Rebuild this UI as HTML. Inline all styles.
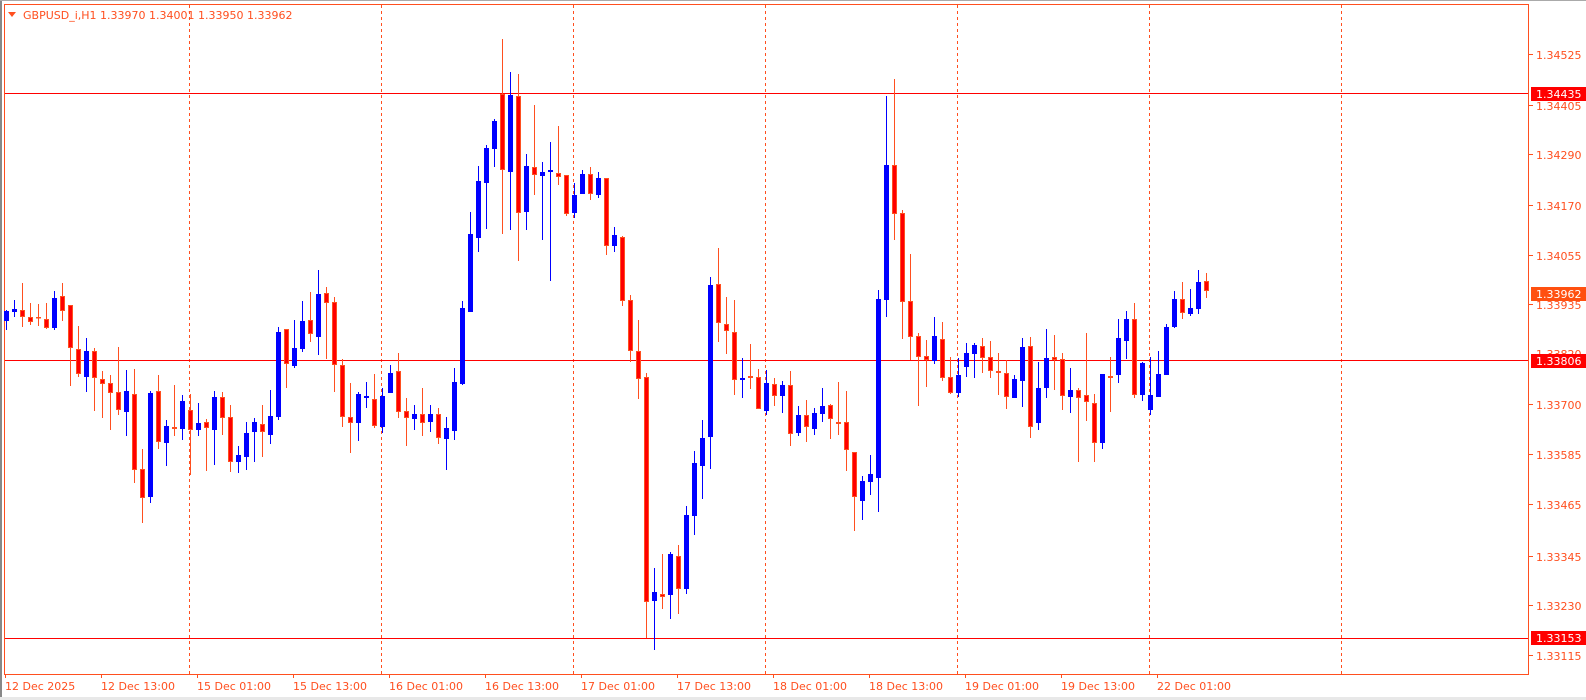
<!DOCTYPE html>
<html><head><meta charset="utf-8"><style>
html,body{margin:0;padding:0;background:#fff;width:1586px;height:700px;overflow:hidden}
svg{display:block}
text{font-family:"DejaVu Sans","Liberation Sans",sans-serif;font-size:11px;fill:#ff4f1f}
</style></head><body>
<svg id="c" width="1586" height="700" xmlns="http://www.w3.org/2000/svg">
<rect x="0" y="0" width="1586" height="700" fill="#fff"/>
<rect x="0" y="0" width="2" height="700" fill="#888"/>
<rect x="0" y="0" width="1586" height="1" fill="#aaa"/>
<rect x="0" y="697" width="1586" height="3" fill="#e8e8e8"/>
<rect x="4.5" y="4.5" width="1524" height="670" fill="none" stroke="#ff4f1f" stroke-width="1"/>
<g stroke="#ff4f1f" stroke-width="1" stroke-dasharray="3,3">
<line x1="189.5" y1="5" x2="189.5" y2="674"/><line x1="381.5" y1="5" x2="381.5" y2="674"/>
<line x1="573.5" y1="5" x2="573.5" y2="674"/><line x1="765.5" y1="5" x2="765.5" y2="674"/>
<line x1="957.5" y1="5" x2="957.5" y2="674"/><line x1="1149.5" y1="5" x2="1149.5" y2="674"/>
<line x1="1341.5" y1="5" x2="1341.5" y2="674"/>
</g>
<g stroke="#ff0000" stroke-width="1">
<line x1="5" y1="93.5" x2="1528" y2="93.5"/><line x1="5" y1="360.5" x2="1528" y2="360.5"/><line x1="5" y1="638.5" x2="1528" y2="638.5"/>
</g>
<g id="cd"></g>
<polygon points="8,12 16,12 12,17" fill="#ff4f1f"/>
<text x="23" y="19">GBPUSD_i,H1  1.33970 1.34001 1.33950 1.33962</text>
<g stroke="#ff4f1f"><line x1="1529" y1="54.5" x2="1533" y2="54.5"/><line x1="1529" y1="105.5" x2="1533" y2="105.5"/><line x1="1529" y1="154.5" x2="1533" y2="154.5"/><line x1="1529" y1="205.5" x2="1533" y2="205.5"/><line x1="1529" y1="255.5" x2="1533" y2="255.5"/><line x1="1529" y1="304.5" x2="1533" y2="304.5"/><line x1="1529" y1="404.5" x2="1533" y2="404.5"/><line x1="1529" y1="454.5" x2="1533" y2="454.5"/><line x1="1529" y1="504.5" x2="1533" y2="504.5"/><line x1="1529" y1="556.5" x2="1533" y2="556.5"/><line x1="1529" y1="605.5" x2="1533" y2="605.5"/><line x1="1529" y1="655.5" x2="1533" y2="655.5"/></g>
<text x="1536" y="59">1.34525</text><text x="1536" y="110">1.34405</text><text x="1536" y="159">1.34290</text><text x="1536" y="210">1.34170</text><text x="1536" y="260">1.34055</text><text x="1536" y="309">1.33935</text><text x="1536" y="358">1.33820</text><text x="1536" y="409">1.33700</text><text x="1536" y="459">1.33585</text><text x="1536" y="509">1.33465</text><text x="1536" y="561">1.33345</text><text x="1536" y="610">1.33230</text><text x="1536" y="660">1.33115</text>
<rect x="1531" y="87" width="55" height="14" fill="#ff0000"/><text x="1536" y="98" style="fill:#fff">1.34435</text>
<rect x="1531" y="287" width="55" height="14" fill="#ff5010"/><text x="1536" y="298" style="fill:#fff">1.33962</text>
<rect x="1531" y="354" width="55" height="14" fill="#ff0000"/><text x="1536" y="365" style="fill:#fff">1.33806</text>
<rect x="1531" y="631" width="55" height="14" fill="#ff0000"/><text x="1536" y="642" style="fill:#fff">1.33153</text>
<g stroke="#ff4f1f"><line x1="5.5" y1="675" x2="5.5" y2="678"/><line x1="101.5" y1="675" x2="101.5" y2="678"/><line x1="197.5" y1="675" x2="197.5" y2="678"/><line x1="293.5" y1="675" x2="293.5" y2="678"/><line x1="389.5" y1="675" x2="389.5" y2="678"/><line x1="485.5" y1="675" x2="485.5" y2="678"/><line x1="581.5" y1="675" x2="581.5" y2="678"/><line x1="677.5" y1="675" x2="677.5" y2="678"/><line x1="773.5" y1="675" x2="773.5" y2="678"/><line x1="869.5" y1="675" x2="869.5" y2="678"/><line x1="965.5" y1="675" x2="965.5" y2="678"/><line x1="1061.5" y1="675" x2="1061.5" y2="678"/><line x1="1157.5" y1="675" x2="1157.5" y2="678"/></g>
<text x="5" y="690">12 Dec 2025</text><text x="101" y="690">12 Dec 13:00</text><text x="197" y="690">15 Dec 01:00</text><text x="293" y="690">15 Dec 13:00</text><text x="389" y="690">16 Dec 01:00</text><text x="485" y="690">16 Dec 13:00</text><text x="581" y="690">17 Dec 01:00</text><text x="677" y="690">17 Dec 13:00</text><text x="773" y="690">18 Dec 01:00</text><text x="869" y="690">18 Dec 13:00</text><text x="965" y="690">19 Dec 01:00</text><text x="1061" y="690">19 Dec 13:00</text><text x="1157" y="690">22 Dec 01:00</text>
</svg>
<script>
var d=[
"B310 311 321 330","B300 309 312 317","R283 310 317 327","R303 317 322 325","R304 317 318 326","R303 319 328 329","B291 298 328 330","R283 296 311 321","R305 305 348 386","R326 349 374 377","B338 351 377 392","R348 351 378 411","R371 379 384 418","R375 383 393 430","R347 392 410 415","B370 391 412 436","R369 394 470 483","R449 469 498 523","B391 393 497 503","R375 391 442 449","B420 426 443 466","R385 427 429 436","B395 401 429 440","R394 410 430 475","B403 423 430 436","R419 422 428 471","B391 397 430 465","R392 397 418 435","R405 417 462 472","B446 455 462 473","B422 433 457 470","B418 422 432 462","R405 424 432 457","B390 416 435 444","B327 332 417 420","R333 329 364 388","B320 348 366 368",
"B301 321 349 352","R292 320 334 342","B270 294 337 355","R287 293 303 359","R297 302 365 392","R359 365 417 427","R383 417 423 453","B392 394 423 441","B382 396 398 408","R374 399 426 428","B388 396 427 433","B365 373 393 393","R353 371 412 418","R398 411 418 446","B405 414 419 430","R388 414 423 436","B405 414 422 432","R408 414 438 444","B417 428 439 470","B368 382 431 440","B301 308 384 385","B212 234 312 312","B166 181 238 252","B145 148 183 229","B119 121 149 167","R39 94 170 234","B72 95 172 230","R74 96 213 261","B154 166 212 230","R105 167 175 195","B162 172 176 240","B142 170 172 281","R126 173 177 185","R175 175 214 216","B183 195 213 218","B170 174 194 194","R167 174 194 200","B172 178 195 198",
"R178 178 246 255","B227 235 246 252","R236 237 301 306","R295 300 351 362","R320 351 379 399","R373 377 602 638","B568 592 601 650","R554 594 597 609","B552 554 595 619","R545 556 589 614","B506 515 589 594","B451 463 516 535","B420 438 466 499","B277 285 437 469","R248 284 323 342","R297 324 331 354","R300 332 380 395","B358 378 380 398","R344 376 378 389","R369 377 409 409","B370 383 411 415","R378 384 396 406","B381 385 396 413","R371 385 434 446","B406 415 433 436","R400 415 427 442","B408 413 429 435","B388 406 414 422","R404 405 419 439","R382 422 424 435","R391 422 450 471","R452 452 497 531","B476 481 501 520","B455 474 482 495","B290 299 478 512",
"B96 165 300 317","R79 165 214 240","R210 213 302 339","R254 301 337 360","R333 336 357 406","R340 356 360 387","B317 336 361 364","R322 339 378 381","R357 377 393 394","B358 375 393 397","B343 353 367 377","B343 345 354 378","R338 346 358 373","R341 357 371 378","R353 371 373 395","R360 373 397 409","B375 379 398 398","B338 347 381 407","R337 346 427 438","B362 388 423 430","B329 358 388 398","R335 357 360 390","R353 359 396 410","B368 390 397 413","R388 390 398 462","R333 395 402 421","R394 403 443 462","B374 374 443 449","R357 376 378 412","B319 338 375 383","B311 319 341 359","R303 319 395 398","B362 363 395 401","B357 395 410 415","B351 374 397 397","B324 327 375 375","B291 299 327 328","R282 299 313 319","B289 308 314 316","B270 282 309 314","R273 281 291 298"];
var s="";
for(var k=0;k<d.length;k++){var c=d[k][0],v=d[k].slice(1).split(" ").map(Number);
var x=6+8*k;var col=c=="B"?"#0000ff":"#ff4f1f";
s+='<rect x="'+x+'" y="'+v[0]+'" width="1" height="'+(v[3]-v[0])+'" fill="'+col+'"/>';
var h=Math.max(v[2]-v[1],1);
if(c=="B")s+='<rect x="'+(x-2)+'" y="'+v[1]+'" width="5" height="'+h+'" fill="#0000ff"/>';
else s+='<rect x="'+(x-1.5)+'" y="'+(v[1]+0.5)+'" width="4" height="'+Math.max(h-1,0.5)+'" fill="#ff0000" stroke="#ff4f1f" stroke-width="1"/>';}
document.getElementById("cd").innerHTML=s;
</script>
</body></html>
